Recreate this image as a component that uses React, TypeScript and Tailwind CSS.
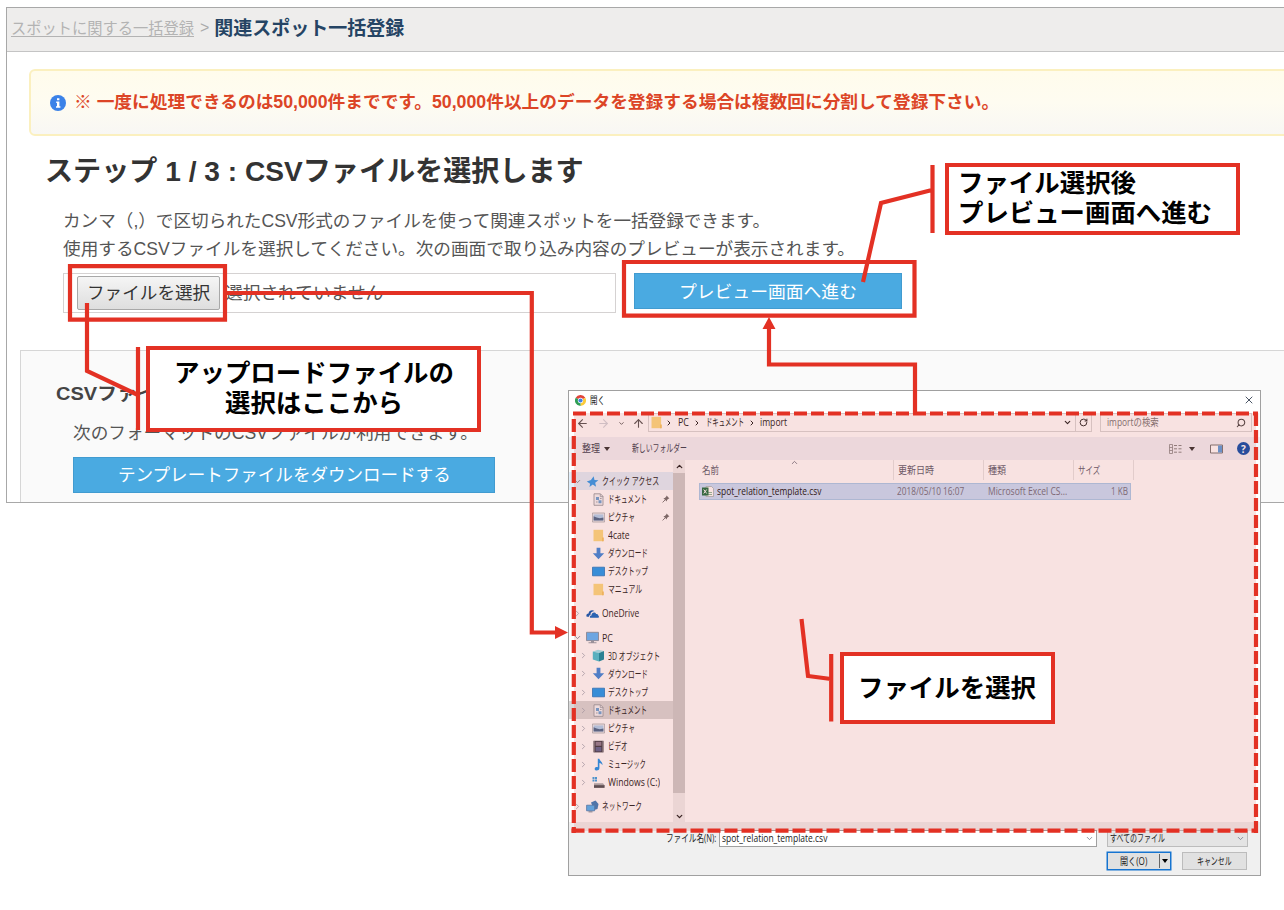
import { useLayoutEffect, useRef, useState } from "react";
import type { ReactNode } from "react";
import {
    ArrowLeft,
    ArrowRight,
    ArrowUp,
    ChevronDown,
    ChevronRight,
    ChevronUp,
    RotateCw,
    Search,
    X,
} from "lucide-react";

interface FitProps {
    w: number;
    className?: string;
    children: ReactNode;
}

// Single line of text, condensed or widened to an exact width
function Fit({ w, className = "", children }: FitProps) {
    const ref = useRef<HTMLSpanElement>(null);
    const [scale, setScale] = useState(1);

    useLayoutEffect(() => {
        if (ref.current) setScale(w / ref.current.offsetWidth);
    }, [w, children]);

    return (
        <span className="inline-block shrink-0" style={{ width: w }}>
            <span
                ref={ref}
                className={`inline-block whitespace-pre origin-left ${className}`}
                style={{ transform: `scaleX(${scale})` }}
            >
                {children}
            </span>
        </span>
    );
}

type IconName =
    | "star"
    | "doc"
    | "picture"
    | "folder"
    | "download"
    | "desktop"
    | "cloud"
    | "pc"
    | "cube"
    | "video"
    | "music"
    | "drive"
    | "network";

function ItemIcon({ name }: { name: IconName }) {
    return (
        <svg className="size-[13px] shrink-0" viewBox="0 0 13 13">
            {name === "star" && (
                <path
                    d="M7.6 1.2 8.5 5l3.9.3-3.2 2.4.9 4-3.3-2.1-3.3 2.3.6-3.2L.8 6.6 5 5z"
                    fill="#2d9cf0"
                />
            )}
            {name === "doc" && (
                <>
                    <path d="M2 .8h6.5L11 3.3v9H2z" fill="#f4f6f8" stroke="#8d949b" strokeWidth=".8" />
                    <path d="M8.3 1v2.6H11" fill="none" stroke="#8d949b" strokeWidth=".7" />
                    <path d="M4 4h3v3H4zM6.5 7.2h3v3h-3z" fill="#6aa5d8" />
                    <path d="M4 9h1.6M8 5.5h1.6" stroke="#8d949b" strokeWidth=".8" />
                </>
            )}
            {name === "picture" && (
                <>
                    <path d="M.4 2h12.2v9H.4z" fill="#f2f5f7" stroke="#98a0a8" strokeWidth=".7" />
                    <path d="M1.6 3.4h9.8v6H1.6z" fill="#aed4f2" />
                    <path d="M1.6 9.4V5.2l3 1.4 3.2.6 3.6-.8v3z" fill="#486a8f" />
                </>
            )}
            {name === "folder" && (
                <>
                    <path d="M1.5.8h9.6v11.4H1.5z" fill="#fbdc84" />
                    <path d="M10 8.4h1.8v3.8H10z" fill="#f4c765" />
                </>
            )}
            {name === "download" && (
                <path d="M4.6.8h3.8v5.4h3.8L6.5 12.2.8 6.2h3.8z" fill="#3b8ae0" />
            )}
            {name === "desktop" && (
                <path d="M.5 2.2h12v8.6H.5z" fill="#1e9cf4" stroke="#1b78c6" strokeWidth=".8" />
            )}
            {name === "cloud" && (
                <>
                    <path d="M.7 9.7C-.3 8 1 6.4 2.5 6.4 3 3.5 6.3 2.2 8.4 4.1 5.5 4.2 4.3 6.4 4.5 8 3.4 8 2.9 9 3.1 9.7z" fill="#0b5cb8" />
                    <path d="M4 10.7C3.6 9 4.8 8.500 5.500 8.600 5.300 5.200 9.200 4.500 10.100 7 12 6.700 12.400 8 12.200 8.600 13.300 9 13.200 10.700 12 10.700z" fill="#0f6bc8" />
                </>
            )}
            {name === "pc" && (
                <>
                    <path d="M.5 1.3h12v8.3H.5z" fill="#5cb8ff" stroke="#7b8a96" strokeWidth=".8" />
                    <path d="M5 10h3v1.2h2.500v1h-8v-1H5z" fill="#92a0ab" />
                </>
            )}
            {name === "cube" && (
                <>
                    <path d="M.8 2.6 6 .7l6 1.400-5 2z" fill="#9be8f2" />
                    <path d="M.8 2.6 7 4.100v8.400L.8 10.500z" fill="#45c5d6" />
                    <path d="M7 4.100l5-2v8.400l-5 2z" fill="#0f8fa5" />
                </>
            )}
            {name === "video" && (
                <>
                    <path d="M1.5.8h10v11.600h-10z" fill="#3a3b45" />
                    <path d="M3.6 1.800h5.800v4H3.600z" fill="#8c7f92" />
                    <path d="M3.6 7h5.800v4.400H3.600z" fill="#5c6690" />
                    <path d="M2.5 1.500v10.500M10.500 1.500v10.500" stroke="#d9d9d9" strokeWidth=".7" strokeDasharray="1 1" />
                </>
            )}
            {name === "music" && (
                <path
                    d="M5.800.8h1.500c.3 2.400 3.800 2.900 3 6.400-.6-1.600-1.700-2-2.900-2.200v5.300c0 2.800-4.700 2.800-4.700.6 0-1.600 1.800-2.200 3.100-1.600z"
                    fill="#1a94f0"
                />
            )}
            {name === "drive" && (
                <>
                    <path d="M.5 1h2v2h-2zM3 1h2v2H3zM.5 3.500h2v2h-2zM3 3.500h2v2H3z" fill="#39a3e6" />
                    <path d="M2 7.200h9l1.500 2v2.600H2z" fill="#a9aeb2" />
                    <path d="M2 9.200h10.500v2.600H2z" fill="#4c5156" />
                </>
            )}
            {name === "network" && (
                <>
                    <path d="M5 2.500 9.500.6l3 3.400-1 5L8 10z" fill="#3a7fbe" />
                    <path d="M.6 5.200h8v5.600h-8z" fill="#52b4f8" stroke="#4380b5" strokeWidth=".8" />
                    <path d="M2.500 11.200h4v1.200h-4z" fill="#8295a4" />
                </>
            )}
        </svg>
    );
}

interface TreeItem {
    label: string;
    icon: IconName;
    w: number;
    pinned?: boolean;
    arrow?: boolean;
    selected?: boolean;
}

const quickItems: TreeItem[] = [
    { label: "ドキュメント", icon: "doc", w: 39, pinned: true },
    { label: "ピクチャ", icon: "picture", w: 27, pinned: true },
    { label: "4cate", icon: "folder", w: 22 },
    { label: "ダウンロード", icon: "download", w: 40 },
    { label: "デスクトップ", icon: "desktop", w: 40 },
    { label: "マニュアル", icon: "folder", w: 34 },
];

const pcItems: TreeItem[] = [
    { label: "3D オブジェクト", icon: "cube", w: 52, arrow: true },
    { label: "ダウンロード", icon: "download", w: 40, arrow: true },
    { label: "デスクトップ", icon: "desktop", w: 40, arrow: true },
    { label: "ドキュメント", icon: "doc", w: 39, arrow: true, selected: true },
    { label: "ピクチャ", icon: "picture", w: 27, arrow: true },
    { label: "ビデオ", icon: "video", w: 20, arrow: true },
    { label: "ミュージック", icon: "music", w: 38, arrow: true },
    { label: "Windows (C:)", icon: "drive", w: 52, arrow: true },
];

function TreeRow({ label, icon, w, pinned, arrow, selected }: TreeItem) {
    return (
        <div className={`flex h-[18.1px] items-center pl-[10px] ${selected ? "bg-[#d9d9d9]" : ""}`}>
            <span className="w-[13px]">
                {arrow && <ChevronRight className="size-[9px] text-gray-400" />}
            </span>
            <ItemIcon name={icon} />
            <span className="ml-[3px] flex">
                <Fit w={w}>{label}</Fit>
            </span>
            {pinned && (
                <svg className="ml-auto mr-[3px] size-[8px]" viewBox="0 0 8 8">
                    <path d="M4.600.6 7.400 3.400 6.400 3.700 5 5.100 4.800 6.600 1.400 3.200 2.900 3 4.300 1.600z" fill="#6f6f6f" />
                    <path d="M3 5 .6 7.400" stroke="#6f6f6f" strokeWidth=".9" />
                </svg>
            )}
        </div>
    );
}

function TreeRoot({ label, icon, w, open, selected }: TreeItem & { open?: boolean }) {
    return (
        <div className={`flex h-[18.1px] items-center pl-[4px] ${selected ? "bg-[#e2f0fc]" : ""}`}>
            <span className="w-[13px]">
                {open ? (
                    <ChevronDown className="size-[9px] text-gray-500" />
                ) : (
                    <ChevronRight className="size-[9px] text-gray-400" />
                )}
            </span>
            <ItemIcon name={icon} />
            <span className="ml-[3px] flex">
                <Fit w={w}>{label}</Fit>
            </span>
        </div>
    );
}

function ChromeLogo() {
    return (
        <svg className="size-[11px]" viewBox="0 0 24 24">
            <path d="M12 12 1.600 6A12 12 0 0 1 22.400 6z" fill="#e0443a" />
            <path d="M12 12 22.400 6A12 12 0 0 1 12 24z" fill="#fbcb3c" />
            <path d="M12 12v12A12 12 0 0 1 1.600 6z" fill="#2f9e55" />
            <circle cx="12" cy="12" r="5.800" fill="#fff" />
            <circle cx="12" cy="12" r="4.600" fill="#3f7fe8" />
        </svg>
    );
}

function OpenDialog() {
    return (
        <div className="absolute left-[568px] top-[390px] flex h-[486px] w-[693px] flex-col border border-[#a0a0a0] bg-white font-['Open_Sans','Noto_Sans_CJK_JP',sans-serif] text-[10.500px] leading-none text-[#222]">
            {/* Title bar */}
            <div className="flex h-[22px] shrink-0 items-center pl-[6px] pr-[5px] pb-[4px]">
                <ChromeLogo />
                <span className="ml-[4px] flex">
                    <Fit w={15}>開く</Fit>
                </span>
                <X className="ml-auto size-[12px] text-gray-600" strokeWidth={2} />
            </div>
            {/* Address bar */}
            <div className="flex h-[24px] shrink-0 items-start">
                <div className="flex h-[20px] w-[79px] items-center pl-[7px] text-[#555]">
                    <ArrowLeft className="size-[13px]" />
                    <ArrowRight className="ml-[8px] size-[13px] text-gray-300" />
                    <ChevronDown className="ml-[8px] size-[7px]" strokeWidth={3} />
                    <ArrowUp className="ml-[7px] size-[13px]" />
                </div>
                <div className="flex h-[19px] w-[444px] items-center border border-[#d9d9d9] pl-[1px]">
                    <ItemIcon name="folder" />
                    <ChevronRight className="ml-[2px] size-[8px]" strokeWidth={3} />
                    <span className="ml-[5px] flex">
                        <Fit w={11}>PC</Fit>
                    </span>
                    <ChevronRight className="ml-[4px] size-[8px]" strokeWidth={3} />
                    <span className="ml-[5px] flex">
                        <Fit w={38}>ドキュメント</Fit>
                    </span>
                    <ChevronRight className="ml-[4px] size-[8px]" strokeWidth={3} />
                    <span className="ml-[4px] flex">
                        <Fit w={27}>import</Fit>
                    </span>
                    <ChevronDown className="ml-auto size-[9px]" strokeWidth={3} />
                    <span className="ml-[3px] flex h-full w-[16px] items-center justify-center border-l border-[#d9d9d9]">
                        <RotateCw className="size-[9px]" strokeWidth={2.5} />
                    </span>
                </div>
                <div className="ml-[8px] flex h-[19px] w-[152px] items-center border border-[#d9d9d9] pl-[6px] pr-[5px] text-[#777]">
                    <Fit w={52}>importの検索</Fit>
                    <Search className="ml-auto size-[10px] -scale-x-100 text-[#444]" strokeWidth={2.5} />
                </div>
            </div>
            {/* Toolbar */}
            <div className="flex h-[23px] shrink-0 items-center bg-[#f1f3f8] pl-[13px] pr-[10px] text-[#3a4052]">
                <Fit w={18}>整理</Fit>
                <span className="ml-[4px] border-x-[3px] border-t-[4px] border-x-transparent border-t-[#333]" />
                <span className="ml-[22px] flex">
                    <Fit w={55}>新しいフォルダー</Fit>
                </span>
                <svg className="ml-auto h-[10px] w-[13px]" viewBox="0 0 13 10">
                    <path d="M.5.500h3v9h-3zM.5 3.500h3M.5 6.500h3" fill="none" stroke="#888" strokeWidth=".8" />
                    <path d="M5 1.500h3M9.500 1.500h3M5 4.800h3M9.500 4.800h3M5 8.200h3M9.500 8.200h3" stroke="#888" />
                </svg>
                <span className="ml-[7px] border-x-[3px] border-t-[4px] border-x-transparent border-t-[#333]" />
                <svg className="ml-[15px] h-[10px] w-[13px]" viewBox="0 0 13 9">
                    <path d="M.5.500h12v8H.5z" fill="#fff" stroke="#777" />
                    <path d="M8 1h4v7H8z" fill="#5b9fe0" />
                </svg>
                <span className="ml-[14px] flex size-[13px] items-center justify-center rounded-full bg-[#0a4fae] text-[10px] font-bold text-white">
                    ?
                </span>
            </div>
            {/* Folder tree and file list */}
            <div className="flex h-[362px] shrink-0">
                <div className="w-[104px] pt-[12px]">
                    <TreeRoot label="クイック アクセス" icon="star" w={57} open selected />
                    {quickItems.map((item) => (
                        <TreeRow key={item.label} {...item} />
                    ))}
                    <div className="h-[6px]" />
                    <TreeRoot label="OneDrive" icon="cloud" w={37} />
                    <div className="h-[6px]" />
                    <TreeRoot label="PC" icon="pc" w={11} open />
                    {pcItems.map((item) => (
                        <TreeRow key={item.label} {...item} />
                    ))}
                    <div className="h-[6px]" />
                    <TreeRoot label="ネットワーク" icon="network" w={40} />
                </div>
                <div className="flex w-[12px] flex-col items-center bg-[#f0f0f0]">
                    <span className="flex h-[13px] items-center">
                        <ChevronUp className="size-[9px]" strokeWidth={3.5} />
                    </span>
                    <span className="h-[320px] w-full bg-[#cdcdcd]" />
                    <span className="flex h-[29px] items-end pb-[1px]">
                        <ChevronDown className="size-[9px]" strokeWidth={3.5} />
                    </span>
                </div>
                <div className="flex-1 pl-[14px]">
                    <div className="relative flex h-[20px] text-[#5c6070]">
                        <ChevronUp className="absolute left-[91px] -top-[2px] size-[9px]" />
                        <div className="flex w-[195px] items-center border-r border-[#e5e5e5] pl-[3px]">
                            <Fit w={17}>名前</Fit>
                        </div>
                        <div className="flex w-[90px] items-center border-r border-[#e5e5e5] pl-[4px]">
                            <Fit w={36}>更新日時</Fit>
                        </div>
                        <div className="flex w-[90px] items-center border-r border-[#e5e5e5] pl-[4px]">
                            <Fit w={18}>種類</Fit>
                        </div>
                        <div className="flex w-[60px] items-center border-r border-[#e5e5e5] pl-[4px]">
                            <Fit w={22}>サイズ</Fit>
                        </div>
                    </div>
                    <div className="mt-[3px] flex h-[17px] w-[432px] items-center border border-[#a9cdee] bg-[#c8e0fb] pl-[2px] text-[#707080]">
                        <svg className="h-[11px] w-[12px]" viewBox="0 0 12 11">
                            <path d="M4 .500h5.500l2 2v8H4z" fill="#fff" stroke="#9aa" strokeWidth=".7" />
                            <path d="M6 6.500h4M6 8.500h4" stroke="#8cbf9d" />
                            <path d="M0 1.500h6.500v8H0z" fill="#1e7145" />
                            <path d="m1.700 3.500 3 4m0-4-3 4" stroke="#fff" />
                        </svg>
                        <span className="ml-[3px] flex text-[#111]">
                            <Fit w={104}>spot_relation_template.csv</Fit>
                        </span>
                        <span className="ml-[76px] flex">
                            <Fit w={67}>2018/05/10 16:07</Fit>
                        </span>
                        <span className="ml-[24px] flex">
                            <Fit w={79}>Microsoft Excel CS...</Fit>
                        </span>
                        <span className="ml-auto mr-[2px] flex">
                            <Fit w={17}>1 KB</Fit>
                        </span>
                    </div>
                </div>
            </div>
            {/* File name and actions */}
            <div className="flex flex-1 flex-col bg-[#f0f0f0]">
                <div className="flex h-[25px] items-end pl-[97px]">
                    <span className="flex h-[17px] w-[53px] items-center">
                        <Fit w={50}>ファイル名(N):</Fit>
                    </span>
                    <div className="flex h-[17px] w-[378px] items-center border border-[#a0a0a0] bg-white pl-[2px] pr-[2px]">
                        <Fit w={105}>spot_relation_template.csv</Fit>
                        <ChevronDown className="ml-auto size-[9px] text-gray-500" />
                    </div>
                    <div className="ml-[10px] flex h-[17px] w-[141px] items-center border border-[#bcbcbc] bg-[#e4e4e4] pl-[2px] pr-[2px]">
                        <Fit w={55}>すべてのファイル</Fit>
                        <ChevronDown className="ml-auto size-[9px] text-gray-500" />
                    </div>
                </div>
                <div className="mt-[5px] flex justify-end pr-[13px]">
                    <div className="flex h-[18px] w-[64px] items-center border-[1.5px] border-[#1674d0] bg-[#e1e1e1] pl-[12px] ring-[0.5px] ring-[#1674d0]">
                        <Fit w={27}>開く(O)</Fit>
                        <span className="ml-auto flex h-[14px] w-[11px] items-center justify-center border-l border-[#666]">
                            <span className="border-x-[3.5px] border-t-[4px] border-x-transparent border-t-black" />
                        </span>
                    </div>
                    <div className="ml-[11px] flex h-[18px] w-[65px] items-center justify-center border border-[#bcbcbc] bg-[#e1e1e1]">
                        <Fit w={35}>キャンセル</Fit>
                    </div>
                </div>
            </div>
        </div>
    );
}

function Annotations() {
    return (
        <>
            <div className="absolute left-[574px] top-[413px] h-[418px] w-[682px] bg-[#cf3a34]/15" />
            <svg
                className="absolute left-0 top-0 h-[910px] w-[1284px]"
                viewBox="0 0 1284 910"
                fill="none"
                stroke="#e33124"
                strokeWidth="4.200"
            >
                <path d="M573 413.500H1258" strokeDasharray="13 4" />
                <path d="M573.800 419V833" strokeDasharray="13 4" />
                <path d="M571.500 830.700H1258" strokeDasharray="13 4" />
                <path d="M1256 413v420" strokeDasharray="13 4" />
                <path d="M70 266.200h155v53.500H70z" />
                <path d="M624 262h290.500v53.700H624z" />
                <path d="M227 293h304.800v339.500H557" />
                <path d="M915 414v-49.500H769V328" />
                <path d="M87 303v68l51 24M138 347v83" />
                <path d="m863 282 18-79 51-13M932.500 165v68" />
                <path d="m801.500 619 6.500 57 23 3M831.200 654v67.500" />
                <path d="m568 632.500-13-6.500v13zM769 317l-6.500 12h13z" fill="#e33124" stroke="none" />
            </svg>
            <div className="absolute left-[146px] top-[346px] flex h-[86px] w-[335px] flex-col items-center border-4 border-[#e33124] bg-white pt-[8px] text-[25px] font-bold leading-[30px] text-black">
                <Fit w={280}>アップロードファイルの</Fit>
                <Fit w={178}>選択はここから</Fit>
            </div>
            <div className="absolute left-[945px] top-[163px] flex h-[72px] w-[295px] flex-col border-4 border-[#e33124] bg-white pl-[9px] pt-[2px] text-[25px] font-bold leading-[29.500px] text-black">
                <Fit w={178}>ファイル選択後</Fit>
                <Fit w={254}>プレビュー画面へ進む</Fit>
            </div>
            <div className="absolute left-[840px] top-[652px] flex h-[72px] w-[215px] items-center justify-center border-4 border-[#e33124] bg-white pr-[2px] text-[25px] font-bold leading-none text-black">
                <Fit w={178}>ファイルを選択</Fit>
            </div>
        </>
    );
}

export default function App() {
    return (
        <div
            lang="ja"
            className="relative h-[910px] w-[1284px] overflow-hidden bg-white pl-[6px] pt-[7px] font-['Liberation_Sans','Noto_Sans_CJK_JP',sans-serif] leading-none text-[#555]"
        >
            <div className="h-[496px] overflow-hidden border-b-[1.5px] border-l border-t border-[#a8a8a8]">
                {/* Breadcrumb */}
                <header className="flex h-[44px] items-center border-b border-[#c4c4c4] bg-[#eeedec] pb-[3px] pl-[4px]">
                    <a className="flex pt-[1px] text-[15.500px] text-[#b3b3b3]">
                        <Fit w={183} className="underline underline-offset-2">
                            スポットに関する一括登録
                        </Fit>
                    </a>
                    <span className="ml-[6px] text-base text-[#aaa]">&gt;</span>
                    <span className="ml-[5px] flex text-[19px] font-bold text-[#254464]">
                        <Fit w={190}>関連スポット一括登録</Fit>
                    </span>
                </header>

                {/* Notice */}
                <div className="-mr-2 ml-[22px] mt-[17px] flex h-[67px] items-center rounded-md border-2 border-[#fbf0bf] bg-linear-to-b from-[#fffcec] via-[#fefcf1] to-[#f8f7f4] pl-[19px]">
                    <svg className="size-4" viewBox="0 0 16 16">
                        <circle cx="8" cy="8" r="8" fill="#3b82e8" />
                        <path d="M7 3.200h2.400v2H7zM6.200 6.500h3.200v4.800h1v1.500H6v-1.500h1V8h-.8z" fill="#fff" />
                    </svg>
                    <span className="ml-[8px] flex pt-[1px] text-[17.600px] font-bold text-[#dc4526]">
                        <Fit w={925}>
                            ※ 一度に処理できるのは50,000件までです。50,000件以上のデータを登録する場合は複数回に分割して登録下さい。
                        </Fit>
                    </span>
                </div>

                {/* Step 1 */}
                <section className="h-[214px] pt-[18px]">
                    <h1 className="ml-[38px] flex h-[36px] items-center text-[28px] font-bold text-[#333]">
                        <Fit w={539}>ステップ 1 / 3 : CSVファイルを選択します</Fit>
                    </h1>
                    <div className="ml-[56px] mt-[17px] flex flex-col text-[17.600px] leading-[28px]">
                        <Fit w={707}>
                            カンマ（,）で区切られたCSV形式のファイルを使って関連スポットを一括登録できます。
                        </Fit>
                        <Fit w={792}>
                            使用するCSVファイルを選択してください。次の画面で取り込み内容のプレビューが表示されます。
                        </Fit>
                    </div>
                    <div className="ml-[56px] mt-[10px] flex text-[17.600px]">
                        <div className="flex h-[40px] w-[553px] items-center border border-[#d5d2d2] pl-[13px]">
                            <button className="flex h-[34px] w-[143px] items-center justify-center rounded-[2px] border border-[#a8a8a8] bg-linear-to-b from-[#f5f5f5] to-[#dedede] pt-[1px] text-[#333]">
                                <Fit w={123}>ファイルを選択</Fit>
                            </button>
                            <span className="ml-[5px] flex pt-[1px]">
                                <Fit w={158}>選択されていません</Fit>
                            </span>
                        </div>
                        <button className="ml-[18px] flex h-[36px] w-[268px] items-center justify-center border border-[#419bd0] bg-[#4aaae1] pr-[2px] pt-[3px] text-white">
                            <Fit w={178}>プレビュー画面へ進む</Fit>
                        </button>
                    </div>
                </section>

                {/* Format */}
                <section className="ml-[13px] flex h-[160px] flex-col border-l border-t border-[#d6d6d6] bg-[#fafafa]">
                    <h2 className="ml-[35px] mt-[34px] flex text-[18px] font-bold text-[#444]">
                        <Fit w={121}>CSVファイル</Fit>
                    </h2>
                    <p className="ml-[52px] mt-[22px] flex text-[17.600px]">
                        <Fit w={405}>次のフォーマットのCSVファイルが利用できます。</Fit>
                    </p>
                    <button className="ml-[52px] mt-[14px] flex h-[36px] w-[422px] items-center justify-center border border-[#419bd0] bg-[#4aaae1] pt-[2px] text-[17.600px] text-white">
                        <Fit w={333}>テンプレートファイルをダウンロードする</Fit>
                    </button>
                </section>
            </div>

            <OpenDialog />
            <Annotations />
        </div>
    );
}
